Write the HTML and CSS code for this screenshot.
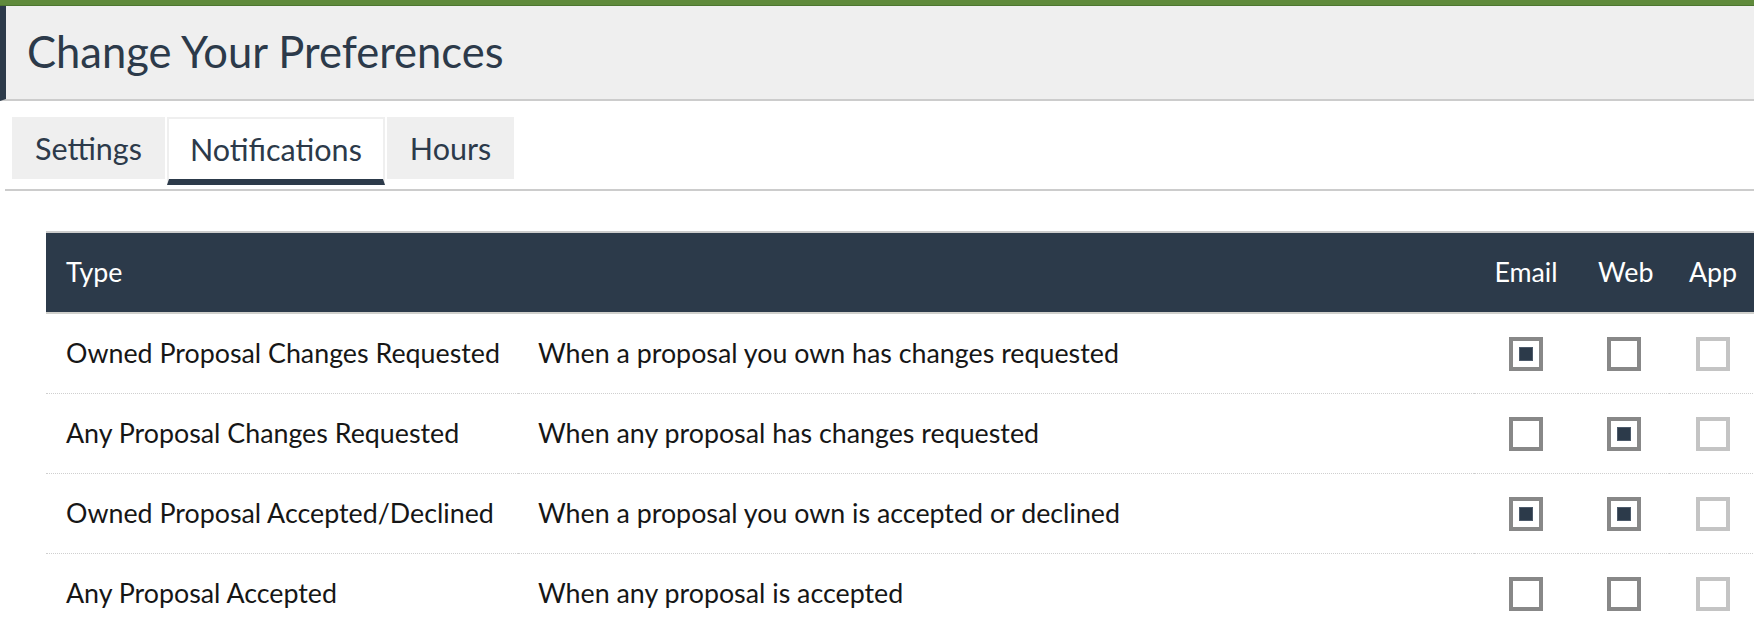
FILE: index.html
```html
<!DOCTYPE html>
<html lang="en">
<head>
<meta charset="utf-8">
<title>Change Your Preferences</title>
<link rel="stylesheet" href="styles.css">
</head>
<body>
<div class="topbar"></div>
<header class="page-header">
  <h1 class="page-title">Change Your Preferences</h1>
</header>
<main class="content">
  <nav class="tabs">
    <a class="tab">Settings</a>
    <a class="tab tab-active">Notifications</a>
    <a class="tab">Hours</a>
  </nav>
  <div class="table-wrap">
    <table class="prefs">
      <colgroup>
        <col class="col-type">
        <col class="col-desc">
        <col class="col-email">
        <col class="col-web">
        <col class="col-app">
      </colgroup>
      <thead>
        <tr>
          <th class="th-left">Type</th>
          <th class="th-left"></th>
          <th>Email</th>
          <th>Web</th>
          <th>App</th>
        </tr>
      </thead>
      <tbody>
        <tr>
          <td>Owned Proposal Changes Requested</td>
          <td>When a proposal you own has changes requested</td>
          <td class="check"><span class="box checked"></span></td>
          <td class="check"><span class="box"></span></td>
          <td class="check"><span class="box disabled"></span></td>
        </tr>
        <tr>
          <td>Any Proposal Changes Requested</td>
          <td>When any proposal has changes requested</td>
          <td class="check"><span class="box"></span></td>
          <td class="check"><span class="box checked"></span></td>
          <td class="check"><span class="box disabled"></span></td>
        </tr>
        <tr>
          <td>Owned Proposal Accepted/Declined</td>
          <td>When a proposal you own is accepted or declined</td>
          <td class="check"><span class="box checked"></span></td>
          <td class="check"><span class="box checked"></span></td>
          <td class="check"><span class="box disabled"></span></td>
        </tr>
        <tr>
          <td>Any Proposal Accepted</td>
          <td>When any proposal is accepted</td>
          <td class="check"><span class="box"></span></td>
          <td class="check"><span class="box"></span></td>
          <td class="check"><span class="box disabled"></span></td>
        </tr>
      </tbody>
    </table>
  </div>
</main>
</body>
</html>
```
FILE: styles.css
```css
html, body {
  margin: 0;
  padding: 0;
  overflow: hidden;
  background: #ffffff;
}

body {
  font-family: "Lato", "Liberation Sans", sans-serif;
  color: #161616;
}

.topbar {
  height: 5px;
  background: #5f8a3b;
  border-bottom: 1px solid #4d7630;
}

.page-header {
  height: 91px;
  background: #efefef;
  border-left: 6px solid #2c3a4a;
  border-bottom: 2px solid #cccccc;
  display: flex;
  align-items: center;
  padding-left: 21px;
  padding-bottom: 2px;
}

.page-title {
  margin: 0;
  font-size: 43.5px;
  font-weight: 400;
  color: #2c3a4a;
  line-height: 1;
}

.content {
  padding-left: 5px;
}

.tabs {
  display: flex;
  align-items: flex-start;
  gap: 2px;
  padding: 16px 0 4px 7px;
  border-bottom: 2px solid #cccccc;
}

.tab {
  box-sizing: border-box;
  height: 62px;
  padding: 0 23px;
  display: flex;
  align-items: center;
  background: #efefef;
  color: #2c3a4a;
  font-size: 30.5px;
  cursor: pointer;
}

.tab-active {
  height: 68px;
  padding: 0 21px;
  background: #ffffff;
  border: 2px solid #efefef;
  border-bottom: 6px solid #2c3a4a;
}

.table-wrap {
  padding: 40px 0 0 41px;
}

.prefs {
  width: 1711px;
  table-layout: fixed;
  border-collapse: separate;
  border-spacing: 0;
  font-size: 26.8px;
}

.col-type { width: 472px; }
.col-email { width: 104px; }
.col-web { width: 91px; }
.col-app { width: 88px; }

.prefs th {
  background: #2c3a4a;
  color: #ffffff;
  font-weight: 400;
  text-align: center;
  padding: 24px 20px;
  line-height: 31px;
  border-top: 2px solid #cccccc;
  border-bottom: 2px solid #d0d0cc;
  white-space: nowrap;
}

.prefs th.th-left {
  text-align: left;
}

.prefs td {
  padding: 24px 20px;
  line-height: 31px;
  border-bottom: 1px dotted #cfcfcf;
  white-space: nowrap;
  vertical-align: middle;
}

.prefs td.check {
  padding: 0 20px;
  text-align: center;
}

.box {
  box-sizing: border-box;
  display: block;
  width: 34px;
  height: 34px;
  margin: 0 auto;
  border: 4px solid #888888;
  background: #ffffff;
  position: relative;
}

.box.disabled {
  border-color: #c4c4c4;
}

.box.checked::after {
  content: "";
  position: absolute;
  left: 6px;
  top: 6px;
  width: 14px;
  height: 14px;
  box-sizing: border-box;
  background: #2c3a4a;
  border: 1px solid #4d5b6b;
}
```
